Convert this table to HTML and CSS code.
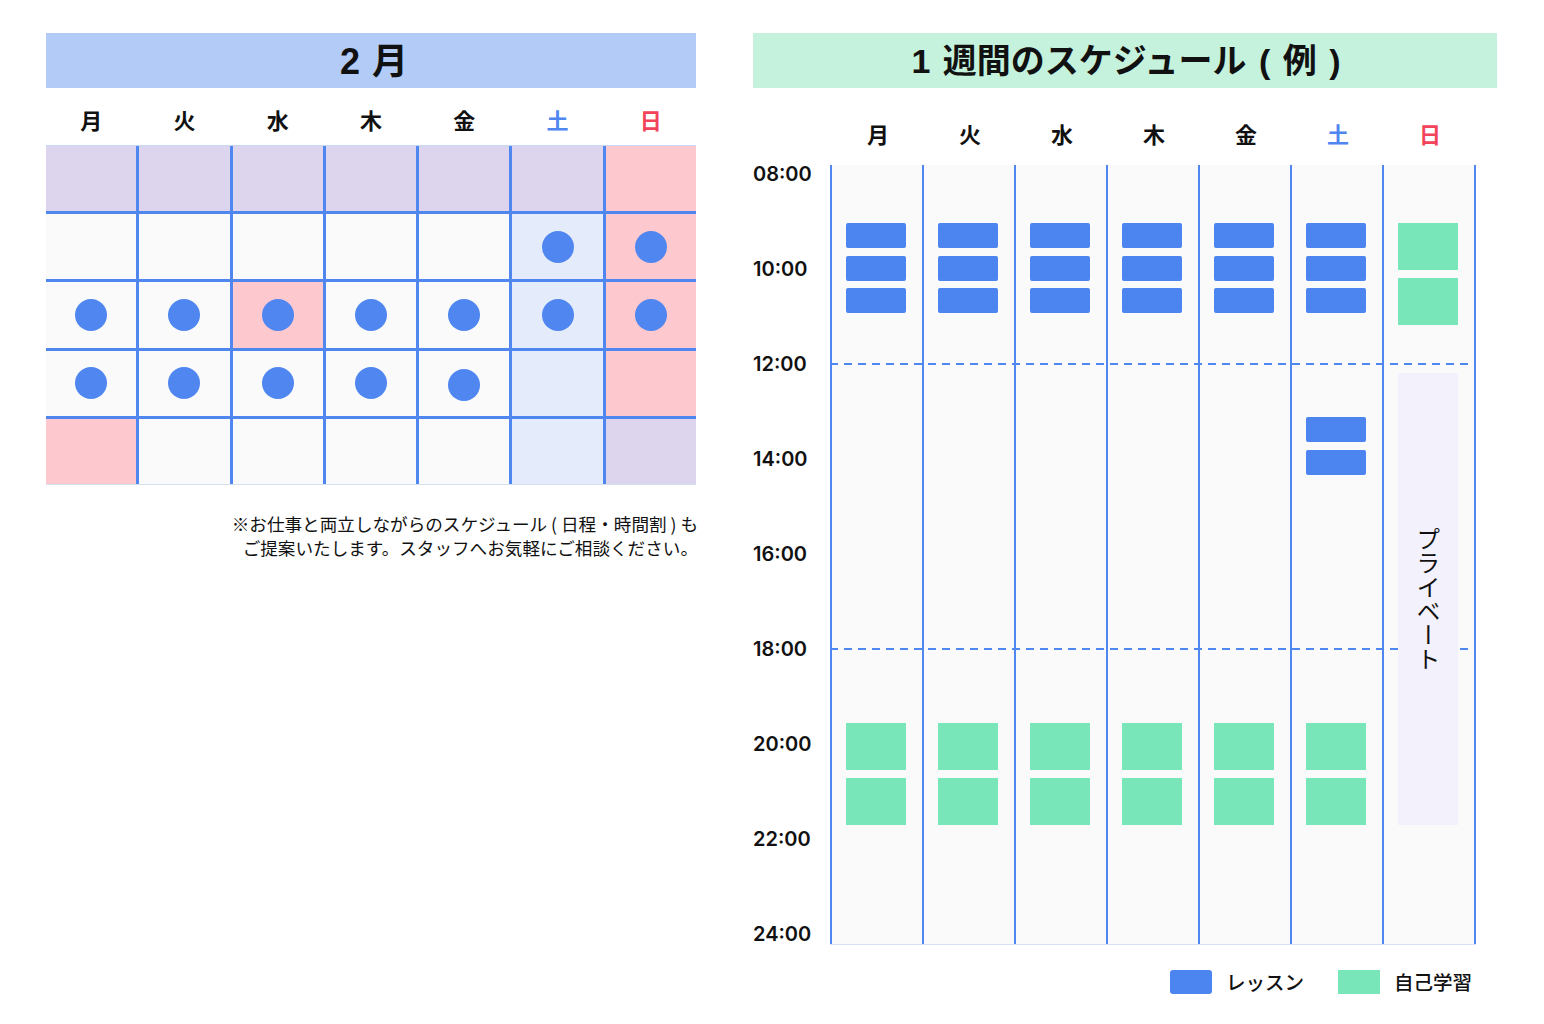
FILE: index.html
```html
<!DOCTYPE html>
<html lang="ja">
<head>
<meta charset="utf-8">
<title>スケジュール</title>
<link rel="stylesheet" href="styles.css">
</head>
<body>
<main class="page">
  <section class="cal">
    <h2 class="cal-title">2 月</h2>
    <div class="cal-days">
      <span>月</span><span>火</span><span>水</span><span>木</span><span>金</span><span class="sat">土</span><span class="sun">日</span>
    </div>
    <div class="cal-grid">
      <div class="c p"></div><div class="c p"></div><div class="c p"></div><div class="c p"></div><div class="c p"></div><div class="c p"></div><div class="c r"></div>
      <div class="c"></div><div class="c"></div><div class="c"></div><div class="c"></div><div class="c"></div><div class="c b"><i></i></div><div class="c r"><i></i></div>
      <div class="c"><i></i></div><div class="c"><i></i></div><div class="c r"><i></i></div><div class="c"><i></i></div><div class="c"><i></i></div><div class="c b"><i></i></div><div class="c r"><i></i></div>
      <div class="c"><i></i></div><div class="c"><i></i></div><div class="c"><i></i></div><div class="c"><i></i></div><div class="c"><i class="low"></i></div><div class="c b"></div><div class="c r"></div>
      <div class="c r"></div><div class="c"></div><div class="c"></div><div class="c"></div><div class="c"></div><div class="c b"></div><div class="c p"></div>
    </div>
    <p class="note">※お仕事と両立しながらのスケジュール ( 日程・時間割 ) も<br>ご提案いたします。スタッフへお気軽にご相談ください。</p>
  </section>

  <section class="sch">
    <h2 class="sch-title">1 週間のスケジュール ( 例 )</h2>
    <div class="sch-days">
      <span>月</span><span>火</span><span>水</span><span>木</span><span>金</span><span class="sat">土</span><span class="sun">日</span>
    </div>
    <div class="sch-body">
      <div class="times">
        <span>08:00</span><span>10:00</span><span>12:00</span><span>14:00</span><span>16:00</span><span>18:00</span><span>20:00</span><span>22:00</span><span>24:00</span>
      </div>
      <div class="grid">
        <div class="dash" style="top:198px"></div>
        <div class="dash" style="top:483px"></div>
        <div class="col">
          <div class="blk les" style="top:58px"></div><div class="blk les" style="top:91px"></div><div class="blk les" style="top:123px"></div>
          <div class="blk stu" style="top:558px"></div><div class="blk stu" style="top:613px"></div>
        </div>
        <div class="col">
          <div class="blk les" style="top:58px"></div><div class="blk les" style="top:91px"></div><div class="blk les" style="top:123px"></div>
          <div class="blk stu" style="top:558px"></div><div class="blk stu" style="top:613px"></div>
        </div>
        <div class="col">
          <div class="blk les" style="top:58px"></div><div class="blk les" style="top:91px"></div><div class="blk les" style="top:123px"></div>
          <div class="blk stu" style="top:558px"></div><div class="blk stu" style="top:613px"></div>
        </div>
        <div class="col">
          <div class="blk les" style="top:58px"></div><div class="blk les" style="top:91px"></div><div class="blk les" style="top:123px"></div>
          <div class="blk stu" style="top:558px"></div><div class="blk stu" style="top:613px"></div>
        </div>
        <div class="col">
          <div class="blk les" style="top:58px"></div><div class="blk les" style="top:91px"></div><div class="blk les" style="top:123px"></div>
          <div class="blk stu" style="top:558px"></div><div class="blk stu" style="top:613px"></div>
        </div>
        <div class="col">
          <div class="blk les" style="top:58px"></div><div class="blk les" style="top:91px"></div><div class="blk les" style="top:123px"></div>
          <div class="blk les" style="top:252px"></div><div class="blk les" style="top:285px"></div>
          <div class="blk stu" style="top:558px"></div><div class="blk stu" style="top:613px"></div>
        </div>
        <div class="col last">
          <div class="blk stu" style="top:58px"></div><div class="blk stu" style="top:113px"></div>
          <div class="blk priv" style="top:208px;height:452px"><span>プライベート</span></div>
        </div>
      </div>
    </div>
    <div class="legend">
      <span class="sw les-sw"></span><span class="lt">レッスン</span>
      <span class="sw stu-sw"></span><span class="lt">自己学習</span>
    </div>
  </section>
</main>
</body>
</html>
```
FILE: styles.css
```css
* { box-sizing: border-box; }
html, body { margin: 0; padding: 0; background: #ffffff; }
body {
  font-family: "Noto Sans CJK JP", "Noto Sans", sans-serif;
  color: #111;
}
.page {
  display: flex;
  align-items: flex-start;
  gap: 57px;
  padding: 33px 0 0 46px;
}
h2 { margin: 0; }

/* ---------- calendar ---------- */
.cal { width: 650px; }
.cal-title {
  height: 55px;
  background: #b3cbf7;
  display: flex;
  align-items: center;
  justify-content: center;
  font-family: "Liberation Sans", "Noto Sans CJK JP", sans-serif;
  font-size: 36px;
  font-weight: 700;
  line-height: 1;
  padding-top: 3px;
  padding-left: 6px;
  word-spacing: 2px;
}
.cal-days {
  display: grid;
  grid-template-columns: repeat(7, 1fr);
  column-gap: 3px;
  height: 57px;
  padding-top: 5px;
  align-items: center;
}
.cal-days span, .sch-days span {
  text-align: center;
  font-size: 22px;
  font-weight: 700;
  line-height: 1;
}
.sat { color: #4f86f0; }
.sun { color: #f2435b; }

.cal-grid {
  display: grid;
  grid-template-columns: repeat(7, 1fr);
  grid-template-rows: repeat(5, 1fr);
  gap: 3px;
  height: 340px;
  background: #4f86f0;
  border-top: 1px solid #c6d6f6;
  border-bottom: 1px solid #d6e0f5;
}
.c {
  background: #fafafa;
  display: flex;
  align-items: center;
  justify-content: center;
}
.c.p { background: #ddd5ed; }
.c.r { background: #fec8cf; }
.c.b { background: #e4ebfa; }
.c i {
  display: block;
  width: 32px;
  height: 32px;
  border-radius: 50%;
  background: #4f86f0;
}
.c i.low { margin-top: 4px; }

.note {
  margin: 27px -2px 0 0;
  text-align: right;
  font-size: 17.6px;
  line-height: 24px;
  color: #111;
}

/* ---------- schedule ---------- */
.sch { width: 744px; }
.sch-title {
  height: 55px;
  background: #c4f2dd;
  display: flex;
  align-items: center;
  justify-content: center;
  font-family: "Liberation Sans", "Noto Sans CJK JP", sans-serif;
  font-size: 34px;
  font-weight: 700;
  line-height: 1;
  padding-top: 1px;
  padding-left: 2px;
  word-spacing: 3px;
}
.sch-days {
  display: grid;
  grid-template-columns: repeat(7, 92px);
  height: 77px;
  padding: 13px 0 0 79px;
  align-items: center;
}
.sch-body {
  display: flex;
}
.times {
  width: 77px;
  display: flex;
  flex-direction: column;
  gap: 76px;
}
.times span {
  height: 19px;
  line-height: 19px;
  font-family: Inter, "Noto Sans", sans-serif;
  font-size: 20px;
  font-weight: 600;
}
.grid {
  position: relative;
  display: flex;
  height: 780px;
  background: #fafafa;
  border-bottom: 1px solid #d8e2f6;
}
.col {
  position: relative;
  width: 92px;
  border-left: 2px solid #4f86f0;
}
.col.last {
  width: 94px;
  border-right: 2px solid #4f86f0;
}
.dash {
  position: absolute;
  left: 0;
  right: 0;
  height: 2px;
  background: repeating-linear-gradient(90deg, #4f86f0 0 8px, transparent 8px 14px);
}
.blk {
  position: absolute;
  left: 14px;
  width: 60px;
}
.les {
  height: 25px;
  background: #4c84f0;
  border-radius: 2px;
}
.stu {
  height: 47px;
  background: #78e6b8;
}
.priv {
  background: #f3f1fb;
  display: flex;
  align-items: center;
  justify-content: center;
}
.priv span {
  writing-mode: vertical-rl;
  font-size: 24px;
  line-height: 1;
  color: #111;
}

.legend {
  display: flex;
  align-items: center;
  justify-content: flex-end;
  margin-top: 25px;
  padding-right: 25px;
}
.sw {
  width: 42px;
  height: 24px;
}
.les-sw { background: #4c84f0; border-radius: 3px; }
.stu-sw { background: #78e6b8; margin-left: 34px; }
.lt {
  margin-left: 14px;
  font-size: 19.5px;
  line-height: 24px;
  font-weight: 500;
}
```
